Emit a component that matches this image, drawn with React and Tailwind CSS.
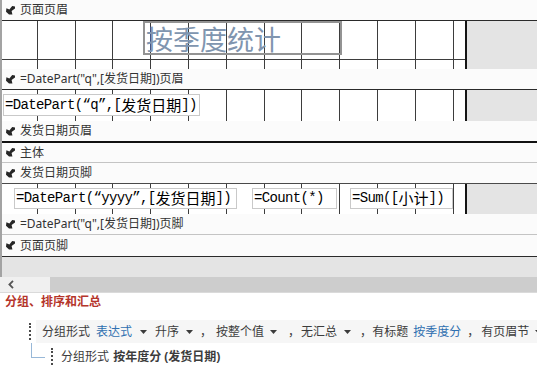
import React from "react";

// grid column widths, lines land on the 1cm ruler marks
const colW = [
  "w-[36px]", "w-[38px]", "w-[37px]", "w-[38px]", "w-[38px]", "w-[38px]",
  "w-[38px]", "w-[37px]", "w-[38px]", "w-[38px]", "w-[38px]", "w-[38px]",
];

function SectionIcon() {
  return (
    <svg width="9" height="9" viewBox="0 0 9 9" className="shrink-0">
      <path d="M6.2 0 L9 0.6 L9 2.6 L5.6 5 L6.4 8.4 L3 8.4 L0 5.8 L0.4 2.2 L3.4 3.4 Z" fill="#262626" />
    </svg>
  );
}

function Bar({ children, line = "h-[21px] border-b border-[#3a3a3a]" }) {
  return (
    <div className={`flex items-center gap-[5px] bg-[#fbfbfb] pl-[4px] text-[12px] text-[#333] ${line}`}>
      <SectionIcon />
      <span className="leading-none">{children}</span>
    </div>
  );
}

function Area({ h, hline, children }) {
  return (
    <div className={`flex ${h}`}>
      <div className="relative w-[465px] shrink-0 border-r-2 border-[#151515] bg-white">
        <div className="absolute inset-0 flex">
          {colW.map((w, i) => (
            <div key={i} className={`${w} shrink-0 border-r border-[#3d3d3d]`} />
          ))}
        </div>
        {hline && <div className="absolute left-0 right-0 top-[38px] h-px bg-[#3d3d3d]" />}
        <div className="relative flex">{children}</div>
      </div>
      <div className="flex-1 bg-[#e4e4e4]" />
    </div>
  );
}

function Box({ cls, children }) {
  return (
    <div
      className={`flex items-center border border-[#c9c9c9] bg-white pl-[1px] font-['Liberation_Mono','Noto_Sans_CJK_SC',monospace] text-[14px] tracking-[-0.65px] text-black whitespace-nowrap ${cls}`}
    >
      {children}
    </div>
  );
}

function Cjk({ children }) {
  return <span className="text-[15px] tracking-normal font-['Noto_Sans_CJK_SC',sans-serif]">{children}</span>;
}

function Caret({ cls = "" }) {
  return (
    <svg width="7" height="4" viewBox="0 0 7 4" className={`shrink-0 ${cls}`}>
      <path d="M0 0h7L3.5 4z" fill="#3c3c3c" />
    </svg>
  );
}

function Handle({ cls = "" }) {
  return <div className={`w-[2px] border-l-2 border-dotted border-[#4a4a4a] ${cls}`} />;
}

export default function App() {
  return (
    <div className="w-[537px] h-[366px] overflow-hidden bg-white font-['Noto_Sans','Noto_Sans_CJK_SC',sans-serif]">
      {/* design surface */}
      <div className="border-l-2 border-[#a3a3a3]">
        <Bar line="h-[21px] border-b border-[#2a2a2a]">页面页眉</Bar>
        <Area h="h-[48px]" hline>
          <div className="ml-[141px] flex h-[34px] w-[199px] items-center border-2 border-[#939393] pl-[1px] text-[27px] leading-none text-[#8095af] font-['Noto_Sans_CJK_SC',sans-serif]">
            按季度统计
          </div>
        </Area>

        <Bar line="h-[21px] border-b border-[#2a2a2a]">=DatePart("q",[发货日期])页眉</Bar>
        <Area h="h-[31px]">
          <Box cls="ml-[1px] mt-[4px] h-[22px] w-[197px]">
            =DatePart(“q”,[<Cjk>发货日期</Cjk>])
          </Box>
        </Area>

        <Bar line="h-[22px] border-b-2 border-[#111]">发货日期页眉</Bar>
        <Bar line="h-[20px] border-b border-[#c4c4c4]">主体</Bar>
        <Bar line="h-[21px] border-b border-[#4a4a4a]">发货日期页脚</Bar>
        <Area h="h-[30px]">
          <Box cls="ml-[12px] mt-[4px] h-[21px] w-[223px]">
            =DatePart(“yyyy”,[<Cjk>发货日期</Cjk>])
          </Box>
          <Box cls="ml-[15px] mt-[4px] h-[21px] w-[85px]">=Count(*)</Box>
          <Box cls="ml-[13px] mt-[4px] h-[21px] w-[103px]">
            =Sum([<Cjk>小计</Cjk>])
          </Box>
        </Area>

        <Bar line="h-[21px] border-b border-[#c4c4c4]">=DatePart("q",[发货日期])页脚</Bar>
        <Bar line="h-[22px] border-b border-[#2a2a2a]">页面页脚</Bar>
        <div className="h-[20px] bg-[#e4e4e4]" />
      </div>

      {/* horizontal scrollbar */}
      <div className="flex h-[16px] border-b border-[#dadada]">
        <div className="flex w-[50px] items-center bg-[#f0f0f0] pl-[8px]">
          <svg width="6" height="9" viewBox="0 0 6 9">
            <path d="M5 0.8 L1.4 4.5 L5 8.2" fill="none" stroke="#555" strokeWidth="1.8" />
          </svg>
        </div>
        <div className="flex-1 bg-[#cdcdcd]" />
      </div>

      {/* group, sort and total pane */}
      <div className="text-[12px] text-[#3c3c3c]">
        <div className="h-[27px] pl-[5px] pt-[1px] leading-[16px] font-bold text-[#b5352b]">分组、排序和汇总</div>

        <div className="flex h-[23px] items-center pl-[29px]">
          <Handle cls="h-[17px]" />
          <div className="ml-[5px] flex h-full flex-1 items-center bg-[#f6f6f6] pl-[6px] whitespace-nowrap leading-none">
            <span>分组形式</span>
            <span className="ml-[6px] text-[#2f6fb0]">表达式</span>
            <Caret cls="ml-[8px]" />
            <span className="ml-[8px]">升序</span>
            <Caret cls="ml-[7px]" />
            <span className="ml-[7px]">，</span>
            <span className="ml-[4px]">按整个值</span>
            <Caret cls="ml-[6px]" />
            <span className="ml-[11px]">，</span>
            <span className="ml-[1px]">无汇总</span>
            <Caret cls="ml-[7px]" />
            <span className="ml-[9px]">，</span>
            <span>有标题</span>
            <span className="ml-[5px] text-[#2f6fb0]">按季度分</span>
            <span className="ml-[6px]">，</span>
            <span className="ml-[2px]">有页眉节</span>
            <Caret cls="ml-[6px]" />
          </div>
        </div>

        <div className="flex h-[23px] items-start">
          <div className="ml-[31px] h-[15px] w-[14px] border-b border-l border-[#98b8d8]" />
          <Handle cls="ml-[6px] mt-[5px] h-[17px]" />
          <div className="ml-[8px] mt-[8px] leading-none whitespace-nowrap">
            分组形式 <span className="ml-[1px] font-bold">按年度分 (发货日期)</span>
          </div>
        </div>
      </div>
    </div>
  );
}
